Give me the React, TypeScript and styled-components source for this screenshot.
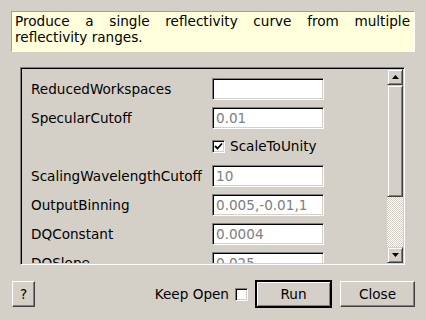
import React from "react";
import styled, { createGlobalStyle } from "styled-components";

const Global = createGlobalStyle`
  html, body { margin: 0; padding: 0; background: #d4d0c8; }
  body { font-family: "DejaVu Sans", "Liberation Sans", sans-serif; font-size: 13.6px; color: #000; }
  * { box-sizing: border-box; }
`;

const Dialog = styled.div`
  width: 426px;
  height: 320px;
  background: #d4d0c8;
  display: flex;
  flex-direction: column;
  padding: 11px 11px 0 11px;
`;

const Description = styled.div`
  width: 404px;
  height: 41px;
  background: #ffffdc;
  border-top: 1px solid #a0a0a0;
  border-left: 1px solid #a0a0a0;
  border-right: 1px solid #ffffff;
  border-bottom: 1px solid #ffffff;
  padding: 1px 4px 0 3px;
  line-height: 16px;
  text-align: justify;
`;

const Frame = styled.div`
  margin: 15px 0 0 9px;
  width: 385px;
  height: 198px;
  display: flex;
  border-top: 1px solid #808080;
  border-left: 1px solid #808080;
  border-right: 1px solid #ffffff;
  border-bottom: 1px solid #ffffff;
  box-shadow: inset 1px 1px 0 #000, inset -1px -1px 0 #d4d0c8;
  padding: 1px;
`;

const Viewport = styled.div`
  flex: 1;
  overflow: hidden;
  padding: 9px 0 0 9px;
`;

const Grid = styled.div`
  display: grid;
  grid-template-columns: 181px 112px;
  grid-auto-rows: 22px;
  row-gap: 7px;
  align-items: center;
`;

const Label = styled.div`
  white-space: nowrap;
`;

const Input = styled.div`
  height: 22px;
  width: 112px;
  background: #fff;
  border-top: 1px solid #808080;
  border-left: 1px solid #808080;
  border-right: 1px solid #fff;
  border-bottom: 1px solid #fff;
  box-shadow: inset 1px 1px 0 #000, inset -1px -1px 0 #d4d0c8;
  color: #808080;
  padding: 2px 0 0 3px;
  line-height: 17px;
  white-space: nowrap;
  overflow: hidden;
`;

const CheckRow = styled.div`
  display: flex;
  align-items: center;
  gap: 5px;
  white-space: nowrap;
  margin-top: -2px;
`;

const Box = styled.div`
  width: 13px;
  height: 13px;
  background: #fff;
  border-top: 1px solid #808080;
  border-left: 1px solid #808080;
  border-right: 1px solid #fff;
  border-bottom: 1px solid #fff;
  box-shadow: inset 1px 1px 0 #000, inset -1px -1px 0 #d4d0c8;
  display: flex;
  align-items: center;
  justify-content: center;
  flex: none;
`;

const ScrollBar = styled.div`
  width: 16px;
  display: flex;
  flex-direction: column;
`;

const Raised = styled.div<{ $h?: number }>`
  height: ${(p) => (p.$h ? `${p.$h}px` : "16px")};
  flex: none;
  background: #d4d0c8;
  border-top: 1px solid #d4d0c8;
  border-left: 1px solid #d4d0c8;
  border-right: 1px solid #404040;
  border-bottom: 1px solid #404040;
  box-shadow: inset 1px 1px 0 #fff, inset -1px -1px 0 #808080;
  display: flex;
  align-items: center;
  justify-content: center;
`;

const Track = styled.div`
  flex: 1;
  background-image: repeating-conic-gradient(#ffffff 0% 25%, #d4d0c8 0% 50%);
  background-size: 2px 2px;
`;

const Footer = styled.div`
  display: flex;
  align-items: center;
  margin-top: 15px;
  padding-left: 1px;
  width: 404px;
`;

const Button = styled.button<{ $w: number; $default?: boolean }>`
  font-family: inherit;
  font-size: 13.6px;
  color: #000;
  width: ${(p) => p.$w}px;
  height: ${(p) => (p.$default ? 28 : 26)}px;
  background: #d4d0c8;
  padding: 0;
  border-top: 1px solid #fff;
  border-left: 1px solid #fff;
  border-right: 1px solid #404040;
  border-bottom: 1px solid #404040;
  box-shadow: inset -1px -1px 0 #808080;
  ${(p) =>
    p.$default
      ? `border-width: 2px; border-color: #000; box-shadow: inset 1px 1px 0 #fff, inset -1px -1px 0 #808080;`
      : ""}
`;

const Spacer = styled.div`
  flex: 1;
`;

const KeepOpen = styled.div`
  display: flex;
  align-items: center;
  gap: 6px;
  margin-right: 7px;
`;

const CloseSlot = styled.div`
  margin-left: 8px;
  display: flex;
`;

const Up = () => (
  <svg width="7" height="4" viewBox="0 0 7 4">
    <path d="M3.5 0 L7 4 L0 4 Z" fill="#000" />
  </svg>
);
const Down = () => (
  <svg width="7" height="4" viewBox="0 0 7 4">
    <path d="M0 0 L7 0 L3.5 4 Z" fill="#000" />
  </svg>
);
const Check = () => (
  <svg width="9" height="9" viewBox="0 0 9 9">
    <path d="M1 4 L3.5 6.5 L8 1.5" stroke="#000" strokeWidth="1.8" fill="none" />
  </svg>
);

const rows: [string, string][] = [
  ["ScalingWavelengthCutoff", "10"],
  ["OutputBinning", "0.005,-0.01,1"],
  ["DQConstant", "0.0004"],
  ["DQSlope", "0.025"],
];

export default function App() {
  return (
    <>
      <Global />
      <Dialog>
        <Description>
          Produce a single reflectivity curve from multiple reflectivity ranges.
        </Description>
        <Frame>
          <Viewport>
            <Grid>
              <Label>ReducedWorkspaces</Label>
              <Input />
              <Label>SpecularCutoff</Label>
              <Input>0.01</Input>
              <span />
              <CheckRow>
                <Box>
                  <Check />
                </Box>
                ScaleToUnity
              </CheckRow>
              {rows.map(([l, v]) => (
                <React.Fragment key={l}>
                  <Label>{l}</Label>
                  <Input>{v}</Input>
                </React.Fragment>
              ))}
            </Grid>
          </Viewport>
          <ScrollBar>
            <Raised>
              <Up />
            </Raised>
            <Raised $h={112} />
            <Track />
            <Raised>
              <Down />
            </Raised>
          </ScrollBar>
        </Frame>
        <Footer>
          <Button $w={23}>?</Button>
          <Spacer />
          <KeepOpen>
            Keep Open
            <Box />
          </KeepOpen>
          <Button $w={77} $default>
            Run
          </Button>
          <CloseSlot>
            <Button $w={75}>Close</Button>
          </CloseSlot>
        </Footer>
      </Dialog>
    </>
  );
}
